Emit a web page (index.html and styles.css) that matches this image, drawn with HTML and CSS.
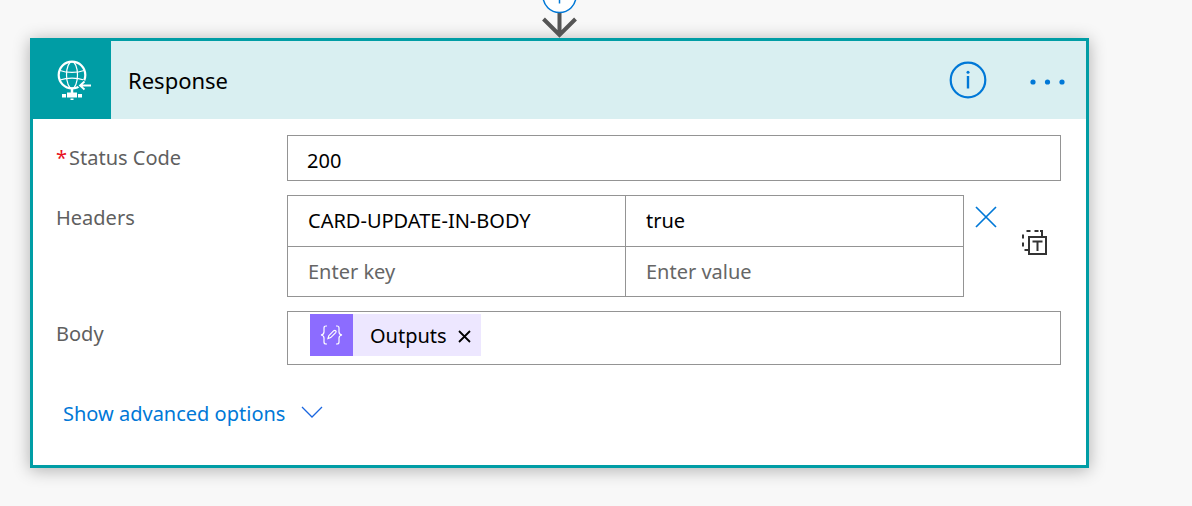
FILE: index.html
```html
<!DOCTYPE html>
<html lang="en">
<head>
  <meta charset="UTF-8" />
  <title>Response</title>
  <meta name="viewport" content="width=device-width, initial-scale=1.0"/>
  <link rel="stylesheet" href="styles.css">
</head>
<body>
  <main class="designer">
    <svg class="connector" width="39" height="38" viewBox="0 0 39 38" aria-hidden="true">
      <path d="M19.5 12V35M3.500 19l16 16L35.500 19" fill="none" stroke="#555" stroke-width="4"/>
      <circle cx="19.5" cy="-4" r="16.5" fill="#fff" stroke="#0078d7" stroke-width="1.5"/>
      <path d="M19.5-11V3.500" stroke="#0078d7" stroke-width="1.5"/>
    </svg>

    <section class="card">
      <header class="card-header">
        <div class="card-icon">
          <svg width="36" height="42" viewBox="0 0 36 42" fill="none" stroke="#fff" aria-hidden="true">
            <circle cx="16" cy="16" r="13.300" stroke-width="2.200"/>
            <ellipse cx="16" cy="16" rx="5.500" ry="13.300" stroke-width="1.200"/>
            <path d="M4 11.500c7 2.500 17 2.500 24 0M4 21c7-2.500 17-2.500 24 0" stroke-width="1.200"/>
            <path d="M36 26.500H25M29 22l-5 4.500 5 4.500" stroke="#009da5" stroke-width="4"/>
            <path d="M35 26.500H24M28.500 22.500l-4.500 4 4.500 4" stroke-width="1.800"/>
            <path d="M16 29v5" stroke-width="2.500"/>
            <path d="M6 35h4v3.500H6zM11 33.500h10v5H11zM22 35h4v3.500h-4zM14.500 39.500h3v1.500h-3z" fill="#fff" stroke="none"/>
          </svg>
        </div>
        <h1>Response</h1>
        <button class="icon-btn info-btn" type="button" aria-label="Information">
          <svg width="38" height="38" viewBox="0 0 38 38">
            <circle cx="19" cy="19" r="17.300" fill="none" stroke="#0078d7" stroke-width="2.200"/>
            <path d="M19 15v12.500" stroke="#0078d7" stroke-width="2.400"/>
            <circle cx="19" cy="11.300" r="1.500" fill="#0078d7"/>
          </svg>
        </button>
        <button class="icon-btn more-btn" type="button" aria-label="More commands">
          <svg width="36" height="8" viewBox="0 0 36 8" fill="#0078d7">
            <circle cx="3" cy="4" r="2.600"/>
            <circle cx="17.500" cy="4" r="2.600"/>
            <circle cx="32" cy="4" r="2.600"/>
          </svg>
        </button>
      </header>

      <form class="card-body">
        <div class="row">
          <label for="statusCode"><span class="required">*</span>Status Code</label>
          <input class="text-field" type="text" id="statusCode" value="200" required>
        </div>

        <div class="row">
          <span class="row-label" id="headersLabel">Headers</span>
          <div class="headers">
            <table aria-labelledby="headersLabel">
              <tbody>
                <tr>
                  <td><input type="text" aria-label="Header key" value="CARD-UPDATE-IN-BODY"></td>
                  <td><input type="text" aria-label="Header value" value="true"></td>
                </tr>
                <tr>
                  <td><input type="text" aria-label="New header key" placeholder="Enter key"></td>
                  <td><input type="text" aria-label="New header value" placeholder="Enter value"></td>
                </tr>
              </tbody>
            </table>
            <button class="icon-btn delete-btn" type="button" aria-label="Delete header">
              <svg width="22" height="22" viewBox="0 0 22 22">
                <path d="M1 1l20 20M21 1L1 21" stroke="#0078d7" stroke-width="1.700"/>
              </svg>
            </button>
            <button class="icon-btn mode-btn" type="button" aria-label="Switch to text mode">
              <svg width="26" height="26" viewBox="0 0 26 26" fill="none" stroke="#333">
                <path d="M4.500 1h4M12.500 1h4M1 4.500v4M1 12.500v4M20 2.500v4M18 1h2v2M2.500 20H6" stroke-width="2"/>
                <path d="M7 7h17v17H7z" fill="#fff" stroke-width="2"/>
                <path d="M10.500 11.500h10M15.500 11.500v9.500" stroke-width="2"/>
              </svg>
            </button>
          </div>
        </div>

        <div class="row">
          <span class="row-label" id="bodyLabel">Body</span>
          <div class="token-field" role="group" aria-labelledby="bodyLabel">
            <span class="token">
              <span class="token-icon">
                <svg width="23" height="20" viewBox="0 0 23 20" fill="none" stroke="#fff" stroke-width="1.200" aria-hidden="true">
                  <path d="M7 1H6Q4 1 4 3v4Q4 9.500 1 10q3 .5 3 3v4q0 2 2 2h1"/>
                  <path d="M16 1h1q2 0 2 2v4q0 2.500 3 3-3 .5-3 3v4q0 2-2 2h-1"/>
                  <path d="M8 13.500l.8-2.800 5-5q1-.8 1.900 0t0 1.900l-5 5z"/>
                </svg>
              </span>
              <span class="token-name">Outputs</span>
              <button class="icon-btn token-remove" type="button" aria-label="Remove Outputs">
                <svg width="13" height="13" viewBox="0 0 13 13">
                  <path d="M1 1l11 11M12 1L1 12" stroke="#000" stroke-width="1.800"/>
                </svg>
              </button>
            </span>
          </div>
        </div>

        <button class="advanced-btn" type="button">
          Show advanced options
          <svg width="22" height="12" viewBox="0 0 22 12" aria-hidden="true">
            <path d="M1 1l10 10L21 1" fill="none" stroke="#1a66e0" stroke-width="1.300"/>
          </svg>
        </button>
      </form>
    </section>
  </main>
</body>
</html>
```
FILE: styles.css
```css
* {
  margin: 0;
  padding: 0;
  box-sizing: border-box;
}

body {
  font-family: 'Segoe UI', 'Noto Sans', sans-serif;
  font-size: 20px;
  background: #f8f8f8;
  color: #000;
}

button,
input {
  font: inherit;
  color: inherit;
}

.designer {
  display: flex;
  flex-direction: column;
  padding: 0 103px 38px 30px;
}

.connector {
  display: block;
  align-self: center;
  position: relative;
  z-index: 1;
}

.card {
  background: #fff;
  border: 3px solid #009da5;
  box-shadow: 0 2px 16px rgba(0, 0, 0, 0.3);
}

.card-header {
  display: flex;
  align-items: center;
  height: 78px;
  padding-right: 20px;
  background: #d9eff1;
}

.card-icon {
  display: flex;
  align-items: center;
  justify-content: center;
  width: 78px;
  height: 78px;
  padding-left: 3px;
  background: #009da5;
}

.card-header h1 {
  flex: 1;
  padding-left: 17px;
  font-size: 22px;
  font-weight: 400;
}

.icon-btn {
  display: flex;
  background: none;
  border: none;
  cursor: pointer;
}

.info-btn {
  margin-right: 43px;
}

.more-btn {
  padding-top: 3px;
}

.card-body {
  display: flex;
  flex-direction: column;
  gap: 14px;
  padding: 16px 25px 38px 23px;
}

.row {
  display: grid;
  grid-template-columns: 231px 1fr;
}

.row label,
.row-label {
  line-height: 46px;
  color: #5f5f5f;
}

.required {
  margin-right: 2px;
  color: #e81123;
}

.text-field {
  width: 100%;
  height: 46px;
  padding: 4px 19px 0;
  border: 1px solid #949494;
}

.headers {
  display: flex;
}

.headers table {
  flex: 1;
  height: 102px;
  table-layout: fixed;
  border-collapse: collapse;
}

.headers td {
  border: 1px solid #949494;
}

.headers td input {
  display: block;
  width: 100%;
  height: 48px;
  padding: 0 20px;
  border: none;
  background: none;
}

.headers input::placeholder {
  color: #666;
  opacity: 1;
}

.delete-btn {
  align-self: flex-start;
  margin: 11px 25px 0 11px;
}

.mode-btn {
  align-self: flex-start;
  margin: 35px 13px 0 0;
}

.token-field {
  height: 54px;
  padding: 2px 22px;
  border: 1px solid #949494;
}

.token {
  display: inline-flex;
  align-items: center;
  height: 42px;
  padding-right: 10px;
  background: #ede7ff;
}

.token-icon {
  display: flex;
  align-items: center;
  justify-content: center;
  width: 43px;
  height: 42px;
  background: #8c6cff;
}

.token-name {
  padding: 0 11px 0 17px;
}

.token-remove {
  padding-top: 3px;
}

.advanced-btn {
  display: flex;
  align-items: center;
  align-self: flex-start;
  gap: 16px;
  margin-top: 21px;
  padding-left: 7px;
  background: none;
  border: none;
  color: #0078d7;
  cursor: pointer;
}

.advanced-btn svg {
  margin-bottom: 4px;
}
```
